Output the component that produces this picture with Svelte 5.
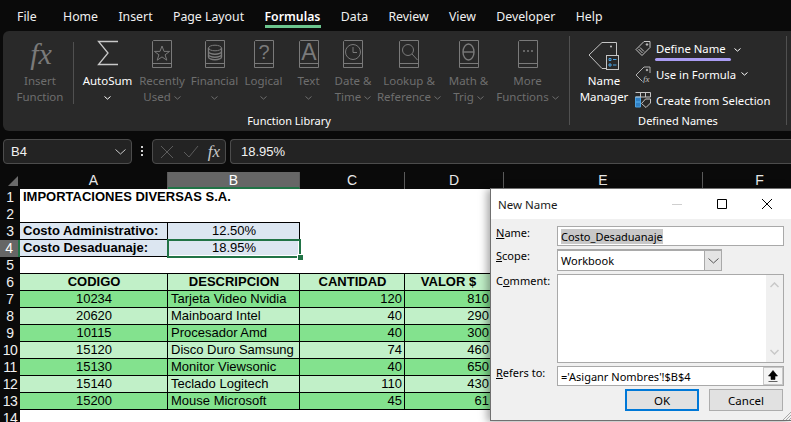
<script lang="ts">
	const tabs = ['File', 'Home', 'Insert', 'Page Layout', 'Formulas', 'Data', 'Review', 'View', 'Developer', 'Help'];

	const library = [
		{ icon: 'star', w: 54, lines: ['Recently', 'Used'], chevron: true },
		{ icon: 'db', w: 51, lines: ['Financial', ''], chevron: true },
		{ icon: 'help', w: 47, lines: ['Logical', ''], chevron: true },
		{ icon: 'text', w: 43, lines: ['Text', ''], chevron: true },
		{ icon: 'clock', w: 46, lines: ['Date &', 'Time'], chevron: true },
		{ icon: 'search', w: 66, lines: ['Lookup &', 'Reference'], chevron: true },
		{ icon: 'theta', w: 53, lines: ['Math &', 'Trig'], chevron: true },
		{ icon: 'more', w: 65, lines: ['More', 'Functions'], chevron: true }
	];

	const columns = [
		{ label: 'A', w: 148 },
		{ label: 'B', w: 132, active: true },
		{ label: 'C', w: 105 },
		{ label: 'D', w: 99 },
		{ label: 'E', w: 199 },
		{ label: 'F', w: 114 }
	];

	const products = [
		['10234', 'Tarjeta Video Nvidia', '120', '810'],
		['20620', 'Mainboard Intel', '40', '290'],
		['10115', 'Procesador Amd', '40', '300'],
		['15120', 'Disco Duro Samsung', '74', '460'],
		['15130', 'Monitor Viewsonic', '40', '650'],
		['15140', 'Teclado Logitech', '110', '430'],
		['15200', 'Mouse Microsoft', '45', '61']
	];
</script>

{#snippet chevron()}
	<svg class="chev" width="7" height="4" viewBox="0 0 7 4"><path d="M.5.5l3 2.6 3-2.6" fill="none" stroke="currentColor" /></svg>
{/snippet}

{#snippet book(kind: string)}
	<svg width="22" height="28" viewBox="0 0 22 28" fill="none" stroke="#7a7a7a">
		<path d="M2.5.5h18v27h-19v-26zM1.5 23.5h19" />
		{#if kind === 'star'}
			<path d="M11 6l2 5.4h5.6l-4.5 3.4 1.7 5.4-4.8-3.3-4.8 3.3 1.7-5.4-4.5-3.4H9z" />
		{:else if kind === 'db'}
			<ellipse cx="11" cy="8" rx="6.5" ry="2.8" />
			<path d="M4.500 8v9c0 1.500 2.900 2.800 6.500 2.800s6.500-1.300 6.500-2.800V8M4.500 11.500c0 1.500 2.900 2.800 6.500 2.800s6.500-1.300 6.500-2.800M4.500 14.500c0 1.500 2.900 2.800 6.500 2.800s6.500-1.300 6.500-2.800" stroke-width="1.400" />
		{:else if kind === 'help'}
			<text x="11" y="19" class="glyph" text-anchor="middle" font-size="20">?</text>
		{:else if kind === 'text'}
			<text x="11" y="20" class="glyph" text-anchor="middle" font-size="23">A</text>
		{:else if kind === 'clock'}
			<circle cx="11" cy="12" r="7.500" />
			<path d="M11 7v5.500h4" />
		{:else if kind === 'search'}
			<circle cx="10" cy="10" r="5.500" />
			<path d="M14 14l5.500 6" />
		{:else if kind === 'theta'}
			<ellipse cx="10.500" cy="12" rx="5.500" ry="8" stroke-width="1.400" />
			<path d="M5 12h11" stroke-width="1.400" />
		{:else if kind === 'more'}
			<circle cx="7" cy="11" r="1" fill="#7a7a7a" stroke="none" />
			<circle cx="11" cy="11" r="1" fill="#7a7a7a" stroke="none" />
			<circle cx="15" cy="11" r="1" fill="#7a7a7a" stroke="none" />
		{/if}
	</svg>
{/snippet}

<div class="app">
	<nav class="tabs">
		{#each tabs as tab}
			<span class="tab" class:current={tab === 'Formulas'} class:first={tab === 'File'}>{tab}</span>
		{/each}
	</nav>

	<section class="ribbon">
		<div class="btn insert">
			<span class="icon fx">fx</span>
			<span class="line off">Insert</span>
			<span class="line off">Function</span>
		</div>
		<div class="sep short"></div>

		<div class="group lib">
			<div class="buttons">
				<div class="btn" style="width: 55px">
					<span class="icon">
						<svg width="22" height="26" viewBox="0 0 22 26" fill="none" stroke="#c8c8c8" stroke-width="1.300">
							<path d="M21 1.500H1.500L11 13 1.500 24.500H21" />
						</svg>
					</span>
					<span class="line on">AutoSum</span>
					<span class="line on">{@render chevron()}</span>
				</div>
				{#each library as item}
					<div class="btn off" style="width: {item.w}px">
						<span class="icon">{@render book(item.icon)}</span>
						<span class="line">{item.lines[0]}</span>
						<span class="line">{item.lines[1]} {@render chevron()}</span>
					</div>
				{/each}
			</div>
			<div class="group-label">Function Library</div>
		</div>
		<div class="sep"></div>

		<div class="group names">
			<div class="buttons">
				<div class="btn manager">
					<span class="icon">
						<svg width="32" height="30" viewBox="0 0 32 30" fill="none">
							<path d="M1 15L14 2.500h14.500V18M20 28.500h-6L1 15" stroke="#c4c4c4" />
							<circle cx="23" cy="6.500" r="1" fill="#c4c4c4" />
							<rect x="18.500" y="15.500" width="12" height="14" fill="#292929" stroke="#c4c4c4" />
							<path d="M21 18.500h2v2h-2zM21 24h2v2h-2z" stroke="#4ba3e3" />
							<path d="M25 19.500h3.500M25 25h3.500" stroke="#4ba3e3" />
						</svg>
					</span>
					<span class="line on">Name</span>
					<span class="line on">Manager</span>
				</div>
				<div class="small-rows">
					<div class="small">
						<svg width="16" height="16" viewBox="0 0 16 16" fill="none" stroke="#c4c4c4">
							<path d="M1 9.500L9 1.500h6v6l-8 8zM3.500 9l4 4M5 7.500l4 4" />
							<circle cx="12" cy="4.500" r=".8" fill="#c4c4c4" />
						</svg>
						<span>Define Name</span>
						<span class="mark"></span>
						<span class="define-chev">{@render chevron()}</span>
					</div>
					<div class="small">
						<svg width="16" height="18" viewBox="0 0 16 18" fill="none" stroke="#b0b0b0">
							<path d="M1 10L9 2h6v6M1 10l6.500 6.500" />
							<circle cx="12" cy="5" r=".8" fill="#c4c4c4" />
							<text x="8" y="17" class="mini" stroke="none" fill="#c4c4c4">fx</text>
						</svg>
						<span>Use in Formula</span>
						{@render chevron()}
					</div>
					<div class="small">
						<svg width="16" height="16" viewBox="0 0 16 16" fill="none">
							<path d="M.5 5h5v5H.5zM.5 10h5v5H.5z" fill="#2f7fc4" stroke="#4ba3e3" />
							<path d="M.5.500h15v4.500M.5 5h15M5.500.500V5M10.500.500V5" stroke="#c4c4c4" />
							<path d="M6.500 11.500l4-4.500h5v4l-4.500 4.500z" fill="#292929" stroke="#c4c4c4" />
						</svg>
						<span>Create from Selection</span>
					</div>
				</div>
			</div>
			<div class="group-label">Defined Names</div>
		</div>
		<div class="sep"></div>
	</section>

	<div class="formula-bar">
		<div class="box name-box">
			<span>B4</span>
			<svg width="11" height="6" viewBox="0 0 11 6"><path d="M.5.5l5 4.500 5-4.500" fill="none" stroke="#c8c8c8" /></svg>
		</div>
		<div class="dots"><i></i><i></i><i></i></div>
		<div class="box fx-box">
			<svg width="14" height="14" viewBox="0 0 14 14"><path d="M1 1l12 12M13 1L1 13" stroke="#5c5c5c" fill="none" /></svg>
			<svg width="16" height="13" viewBox="0 0 16 13"><path d="M1 7l5 5L15 1" stroke="#5c5c5c" fill="none" /></svg>
			<span class="fx-small">fx</span>
		</div>
		<div class="box formula">18.95%</div>
	</div>

	<div class="sheet">
		<div class="col-heads">
			<div class="corner"><span></span></div>
			{#each columns as col}
				<div class="col-head" class:active={col.active} style="width: {col.w}px">{col.label}</div>
			{/each}
		</div>

		<div class="row">
			<div class="row-head">1</div>
			<div class="cell a"><b class="overflow">IMPORTACIONES DIVERSAS S.A.</b></div>
		</div>
		<div class="row under-ab">
			<div class="row-head">2</div>
		</div>
		<div class="row">
			<div class="row-head">3</div>
			<div class="cell a lined blue bold">Costo Administrativo:</div>
			<div class="cell b lined blue center">12.50%</div>
		</div>
		<div class="row">
			<div class="row-head active">4</div>
			<div class="cell a lined blue bold">Costo Desaduanaje:</div>
			<div class="cell b lined blue center selected">
				18.95%
				<span class="handle"></span>
			</div>
		</div>
		<div class="row">
			<div class="row-head">5</div>
		</div>
		<div class="row table-top">
			<div class="row-head">6</div>
			<div class="cell a lined light center bold">CODIGO</div>
			<div class="cell b lined light center bold">DESCRIPCION</div>
			<div class="cell c lined light center bold">CANTIDAD</div>
			<div class="cell d lined light center bold">VALOR $</div>
		</div>
		{#each products as p, i}
			<div class="row">
				<div class="row-head">{i + 7}</div>
				<div class="cell a lined center" class:dark={i % 2 === 0} class:light={i % 2 === 1}>{p[0]}</div>
				<div class="cell b lined" class:dark={i % 2 === 0} class:light={i % 2 === 1}>{p[1]}</div>
				<div class="cell c lined right" class:dark={i % 2 === 0} class:light={i % 2 === 1}>{p[2]}</div>
				<div class="cell d lined right" class:dark={i % 2 === 0} class:light={i % 2 === 1}>{p[3]}</div>
			</div>
		{/each}
		<div class="row">
			<div class="row-head">14</div>
		</div>

		<div class="dialog">
			<header class="title">
				<span>New Name</span>
				<div class="win-controls">
					<svg width="12" height="12" viewBox="0 0 12 12"><path d="M1 6.500h10" stroke="#cfcfcf" /></svg>
					<svg width="12" height="12" viewBox="0 0 12 12"><path d="M1.500 1.500h9v9h-9z" fill="none" stroke="#000" /></svg>
					<svg width="12" height="12" viewBox="0 0 12 12"><path d="M1 1l10 10M11 1L1 11" fill="none" stroke="#000" /></svg>
				</div>
			</header>
			<div class="form">
				<div class="field name-field">
					<label for="nm"><u>N</u>ame:</label>
					<div id="nm" class="input wide"><span class="sel">Costo_Desaduanaje</span></div>
				</div>
				<div class="field scope-field">
					<label for="sc"><u>S</u>cope:</label>
					<div id="sc" class="input scope">
						<span>Workbook</span>
						<span class="drop">
							<svg width="11" height="6" viewBox="0 0 11 6"><path d="M.5.5l5 4.500 5-4.500" fill="none" stroke="#555" /></svg>
						</span>
					</div>
				</div>
				<div class="field comment-field">
					<label for="cm">C<u>o</u>mment:</label>
					<div id="cm" class="input comment">
						<div class="scrollbar">
							<svg width="9" height="6" viewBox="0 0 9 6"><path d="M.5 5l4-4 4 4" fill="none" stroke="#c8c8c8" stroke-width="1.500" /></svg>
							<svg width="9" height="6" viewBox="0 0 9 6"><path d="M.5 1l4 4 4-4" fill="none" stroke="#c8c8c8" stroke-width="1.500" /></svg>
						</div>
					</div>
				</div>
				<div class="field refers-field">
					<label for="rf"><u>R</u>efers to:</label>
					<div id="rf" class="input wide refers">
						<span>='Asiganr Nombres'!$B$4</span>
						<span class="picker">
							<svg width="10" height="12" viewBox="0 0 10 12"><path d="M5 .5L9.500 6H7v3.500H3V6H.5zM.5 11.500h9" fill="#000" stroke="#000" stroke-width=".6" /></svg>
						</span>
					</div>
				</div>
				<div class="actions">
					<button class="ok">OK</button>
					<button>Cancel</button>
				</div>
				<svg class="grip" width="8" height="8" viewBox="0 0 8 8"><path d="M8 0L0 8M8 3L3 8M8 6L6 8" stroke="#a8a8a8" fill="none" /></svg>
			</div>
		</div>
	</div>
</div>

<style>
	:global(body) {
		margin: 0;
		background: #fff;
	}

	.app {
		position: relative;
		width: 791px;
		height: 422px;
		overflow: hidden;
		font-family: 'Noto Sans', sans-serif;
		font-size: 12px;
		background: #0a0a0a;
	}

	.tabs {
		display: flex;
		height: 31px;
		align-items: stretch;
		padding-left: 17px;
		gap: 20.4px;
		color: #f0f0f0;
	}

	.tab {
		position: relative;
		font-size: 12.3px;
		line-height: 33px;
	}

	.tab.first {
		margin-right: 6px;
	}

	.tab.current {
		color: #fff;
		font-weight: 600;
	}

	.tab.current::after {
		content: '';
		position: absolute;
		left: 0;
		right: -1px;
		bottom: 3px;
		height: 3px;
		background: #6cc58e;
	}

	.ribbon {
		display: flex;
		height: 100px;
		margin-left: 3px;
		background: #292929;
		border-radius: 6px 0 0 6px;
		color: #fff;
	}

	.sep {
		width: 1px;
		height: 89px;
		margin-top: 5px;
		background: #505050;
	}

	.sep.short {
		height: 62px;
		margin-top: 11px;
	}

	.group {
		display: flex;
		flex-direction: column;
	}

	.group.lib {
		width: 495px;
		padding-left: 6px;
		box-sizing: border-box;
	}

	.group.names {
		width: 216px;
	}

	.buttons {
		display: flex;
		height: 82px;
		padding-top: 9px;
		box-sizing: border-box;
	}

	.group-label {
		height: 16px;
		line-height: 16px;
		font-size: 11px;
		text-align: center;
	}

	.lib .group-label {
		padding-right: 71px;
	}

	.btn {
		display: flex;
		flex-direction: column;
		align-items: center;
		flex: none;
	}

	.btn.insert {
		width: 70px;
		padding: 9px 0 0 4px;
		box-sizing: border-box;
	}

	.btn.manager {
		width: 54px;
		margin-left: 7px;
	}

	.icon {
		display: flex;
		justify-content: center;
		align-items: flex-start;
		height: 33px;
	}

	.icon.fx {
		font-family: 'Liberation Serif', serif;
		font-style: italic;
		font-size: 30px;
		line-height: 28px;
		padding-left: 2px;
		color: #7a7a7a;
	}

	.line {
		height: 16px;
		line-height: 16px;
		font-size: 11.500px;
		white-space: nowrap;
	}

	.line.on {
		color: #fff;
	}

	.line.off,
	.btn.off {
		color: #6e6e6e;
	}

	.chev {
		vertical-align: 1px;
	}

	.glyph {
		font-family: 'Liberation Sans', sans-serif;
		fill: #7a7a7a;
		stroke: none;
	}

	.mini {
		font-family: 'Liberation Serif', serif;
		font-style: italic;
		font-size: 9px;
	}

	.small-rows {
		display: flex;
		flex-direction: column;
		margin: -5px 0 0 4px;
	}

	.small {
		position: relative;
		display: flex;
		align-items: center;
		gap: 5px;
		height: 26px;
		font-size: 11.300px;
		white-space: nowrap;
	}

	.mark {
		position: absolute;
		left: 20px;
		bottom: 0;
		width: 76px;
		height: 3px;
		border-radius: 2px;
		background: #a99cf2;
	}

	.define-chev {
		margin-left: 3px;
	}

	.formula-bar {
		display: flex;
		align-items: flex-start;
		height: 41px;
		padding: 8px 0 0 3px;
		box-sizing: border-box;
		color: #f2f2f2;
	}

	.box {
		display: flex;
		align-items: center;
		box-sizing: border-box;
		height: 25px;
		background: #232323;
		border: 1px solid #4c4c4c;
		border-radius: 4px;
	}

	.name-box {
		justify-content: space-between;
		width: 129px;
		padding: 0 5px 0 7px;
		font-family: 'Liberation Sans', sans-serif;
		font-size: 13px;
	}

	.dots {
		display: flex;
		flex-direction: column;
		align-items: center;
		gap: 2px;
		width: 20px;
		padding-top: 7px;
	}

	.dots i {
		width: 2px;
		height: 2px;
		background: #d0d0d0;
	}

	.fx-box {
		justify-content: space-between;
		width: 74px;
		padding: 0 5px 0 7px;
	}

	.fx-small {
		font-family: 'Liberation Serif', serif;
		font-style: italic;
		font-size: 17px;
		color: #c8c8c8;
	}

	.formula {
		flex: 1;
		margin-left: 4px;
		padding-left: 10px;
		border-radius: 4px 0 0 4px;
		border-right: 0;
		font-size: 13px;
		font-family: 'Liberation Sans', sans-serif;
	}

	.sheet {
		position: relative;
		height: 250px;
		background: #fff;
		font-family: 'Liberation Sans', sans-serif;
		font-size: 13px;
		color: #000;
	}

	.col-heads {
		display: flex;
		height: 17px;
		background: #0a0a0a;
		color: #e8e8e8;
		font-size: 14px;
	}

	.corner {
		position: relative;
		width: 20px;
		flex: none;
	}

	.corner span {
		position: absolute;
		right: 2px;
		bottom: 3px;
		border-style: solid;
		border-width: 0 0 10px 10px;
		border-color: transparent transparent #6a6a6a transparent;
	}

	.col-head {
		flex: none;
		box-sizing: border-box;
		border-right: 1px solid #5a5a5a;
		line-height: 16px;
		text-align: center;
	}

	.col-head.active {
		background: #666;
		border-bottom: 2px solid #217346;
		color: #fff;
	}

	.row {
		display: flex;
		height: 17px;
	}

	.row-head {
		flex: none;
		width: 20px;
		box-sizing: border-box;
		background: #0a0a0a;
		color: #f0f0f0;
		font-size: 14px;
		letter-spacing: -0.5px;
		line-height: 17px;
		text-align: center;
	}

	.row-head.active {
		background: #666;
		border-right: 2px solid #217346;
		color: #fff;
	}

	.cell {
		position: relative;
		flex: none;
		box-sizing: border-box;
		height: 17px;
		padding: 0 2px 0 3px;
		line-height: 16px;
		white-space: nowrap;
		overflow: hidden;
	}

	.cell.a {
		width: 148px;
		overflow: visible;
	}

	.cell.b {
		width: 132px;
	}

	.cell.c {
		width: 105px;
	}

	.cell.d {
		width: 99px;
		padding-right: 14px;
	}

	.cell.lined {
		border-right: 1px solid #000;
		border-bottom: 1px solid #000;
	}

	.under-ab::after {
		content: '';
		width: 280px;
		height: 17px;
		box-sizing: border-box;
		border-bottom: 1px solid #000;
	}

	.row:has(+ .table-top)::after {
		content: '';
		width: 484px;
		height: 17px;
		box-sizing: border-box;
		border-bottom: 1px solid #000;
	}

	.overflow {
		position: absolute;
		left: 3px;
		top: 0;
	}

	.bold {
		font-weight: 700;
	}

	.center {
		text-align: center;
	}

	.right {
		text-align: right;
	}

	.blue {
		background: #dce6f1;
	}

	.light {
		background: #c1f0c8;
	}

	.dark {
		background: #83e28e;
	}

	.selected {
		overflow: visible;
		outline: 2px solid #217346;
		outline-offset: -1px;
		box-shadow: inset 0 0 0 1px #fff;
		z-index: 1;
	}

	.handle {
		position: absolute;
		right: -4px;
		bottom: -4px;
		width: 5px;
		height: 5px;
		background: #217346;
		border: 1px solid #fff;
		border-width: 1px 0 0 1px;
	}

	.dialog {
		position: absolute;
		left: 490px;
		top: 16px;
		width: 301px;
		height: 233px;
		box-sizing: border-box;
		display: flex;
		flex-direction: column;
		background: #f0f0f0;
		border: 1px solid #707070;
		border-right: 0;
		box-shadow: -3px 1px 8px rgba(0, 0, 0, 0.35);
		font-family: 'Noto Sans', sans-serif;
		font-size: 11px;
		z-index: 2;
	}

	.title {
		display: flex;
		align-items: center;
		justify-content: space-between;
		flex: none;
		height: 30px;
		padding-left: 7px;
		background: #fff;
		font-size: 11.500px;
		color: #1a1a1a;
	}

	.win-controls {
		display: flex;
		gap: 33px;
		margin-right: 18px;
	}

	.form {
		position: relative;
		flex: 1;
		padding-top: 7px;
	}

	.field {
		display: flex;
		margin-left: 5px;
	}

	.field label {
		width: 61px;
		flex: none;
		line-height: 14px;
	}

	.input {
		display: flex;
		align-items: center;
		box-sizing: border-box;
		background: #fff;
		border: 1px solid #a9a9a9;
		padding-left: 3px;
		font-size: 11px;
		white-space: nowrap;
	}

	.wide {
		width: 227px;
	}

	.name-field .input {
		height: 20px;
	}

	.sel {
		background: #c8c8c8;
	}

	.scope-field {
		margin-top: 3px;
	}

	.scope {
		position: relative;
		justify-content: space-between;
		width: 165px;
		height: 22px;
		padding-right: 0;
		border-width: 2px 1px 1px 1px;
	}

	.drop {
		display: flex;
		align-items: center;
		justify-content: center;
		width: 16px;
		height: 100%;
		background: #e4e4e4;
		border-left: 1px solid #a9a9a9;
	}

	.comment-field {
		margin-top: 3px;
	}

	.comment {
		justify-content: flex-end;
		width: 227px;
		height: 89px;
		padding: 0;
	}

	.scrollbar {
		display: flex;
		flex-direction: column;
		align-items: center;
		justify-content: space-between;
		width: 17px;
		height: 100%;
		padding: 7px 0;
		box-sizing: border-box;
		background: #f0f0f0;
	}

	.refers-field {
		margin-top: 3px;
	}

	.refers {
		justify-content: space-between;
		height: 20px;
		padding-right: 0;
	}

	.picker {
		display: flex;
		align-items: center;
		justify-content: center;
		width: 20px;
		height: 100%;
		background: #f4f4f4;
		border: 1px solid #c8c8c8;
		box-sizing: border-box;
	}

	.actions {
		display: flex;
		gap: 10px;
		margin: 3px 0 0 134px;
	}

	button {
		width: 74px;
		height: 22px;
		padding: 0;
		background: #e1e1e1;
		border: 1px solid #adadad;
		font-family: inherit;
		font-size: 11.500px;
		color: #000;
	}

	button.ok {
		border: 2px solid #0078d7;
	}

	.grip {
		position: absolute;
		right: 0;
		bottom: 0;
	}
</style>
